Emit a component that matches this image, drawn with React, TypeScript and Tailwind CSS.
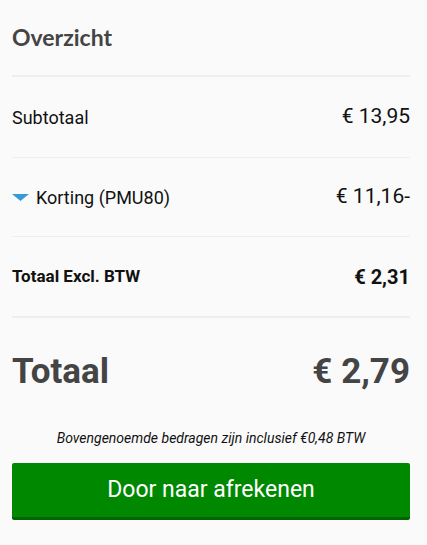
export default function App() {
	const roboto = { fontFamily: "Roboto, 'Liberation Sans', sans-serif" };

	return (
		<div className="min-h-screen w-[427px] bg-[#fafafa]" style={roboto}>
			<div className="ml-3 w-[398px] flex flex-col">
				<h2
					className="pt-[23px] pb-[24px] text-[23px] leading-[28px] font-bold text-[#444]"
					style={{ fontFamily: "Lato, sans-serif" }}
				>
					Overzicht
				</h2>
				<div className="h-[2px] bg-[#eeeeee]" />

				<div className="flex justify-between items-center h-[80px] text-[18px] text-[#111]">
					<span>Subtotaal</span>
					<span className="text-[21px]">€ 13,95</span>
				</div>
				<div className="h-px bg-[#eeeeee]" />

				<div className="flex justify-between items-center h-[78px] text-[18px] text-[#111]">
					<span className="flex items-center gap-[7px]">
						<svg width="17" height="7" viewBox="0 0 17 7">
							<polygon points="0,0 17,0 8.5,7" fill="#3a9ad9" />
						</svg>
						Korting (PMU80)
					</span>
					<span className="text-[21px]">€ 11,16-</span>
				</div>
				<div className="h-px bg-[#eeeeee]" />

				<div className="flex justify-between items-center h-[79px] text-[17px] font-bold text-[#111]">
					<span>Totaal Excl. BTW</span>
					<span className="text-[20px]">€ 2,31</span>
				</div>
				<div className="h-[2px] bg-[#eeeeee]" />

				<div className="flex justify-between items-center h-[108px] text-[35px] font-bold text-[#444]">
					<span>Totaal</span>
					<span>€ 2,79</span>
				</div>

				<p className="text-center italic text-[14px] text-[#111] mt-[2px]">
					Bovengenoemde bedragen zijn inclusief €0,48 BTW
				</p>

				<button className="mt-[14px] h-[57px] w-full rounded-[2px] bg-[#008800] border-b-[3px] border-[#006400] text-white text-[23px]">
					Door naar afrekenen
				</button>
			</div>
		</div>
	);
}
